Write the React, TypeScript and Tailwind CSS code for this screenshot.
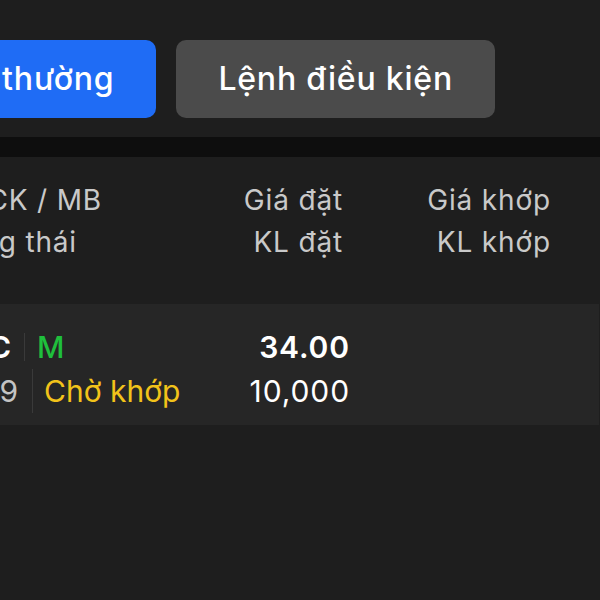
import React from "react";

export default function App() {
  return (
    <div
      className="w-[600px] h-[600px] overflow-hidden bg-[#1e1e1e]"
      style={{ fontFamily: "Inter, 'Noto Sans', sans-serif" }}
    >
      <div className="w-[800px] -ml-[200px]">
        {/* Tabs */}
        <div className="flex justify-end gap-[20px] pr-[105px] pt-[40px]">
          <div className="shrink-0 whitespace-nowrap px-[42px] h-[78px] rounded-[10px] bg-[#1f6cf5] flex items-center justify-center text-white text-[32px] tracking-[0.025em] font-medium">
            Lệnh thường
          </div>
          <div className="shrink-0 whitespace-nowrap px-[42px] h-[78px] rounded-[10px] bg-[#4b4b4b] flex items-center justify-center text-white text-[32px] tracking-[0.025em] font-medium">
            Lệnh điều kiện
          </div>
        </div>

        {/* Divider band */}
        <div className="mt-[19px] h-[20px] bg-[#0e0e0e]" />

        {/* Header */}
        <div className="flex pl-[136px] pt-[22px] pb-[41px] text-[28px] tracking-[0.03em] leading-[42px] text-[#c9c9c9]">
          <div className="w-[257px] flex flex-col whitespace-nowrap">
            <span>Mã CK / MB</span>
            <span>Trạng thái</span>
          </div>
          <div className="w-[150px] flex flex-col text-right whitespace-nowrap">
            <span>Giá đặt</span>
            <span>KL đặt</span>
          </div>
          <div className="w-[208px] flex flex-col text-right whitespace-nowrap">
            <span>Giá khớp</span>
            <span>KL khớp</span>
          </div>
        </div>

        {/* Row */}
        <div className="flex pl-[147px] pt-[21px] pb-[12px] bg-[#262626] w-[799px] text-[30px] leading-[44px]">
          <div className="w-[252px] flex flex-col">
            <div className="flex items-center h-[44px]">
              <span className="w-[64px] flex justify-end whitespace-nowrap font-semibold text-white">VIC</span>
              <span className="ml-[13px] w-px h-[28px] bg-[#3a3a3a]" />
              <span className="ml-[12px] text-[#1fbf3c] font-medium">M</span>
            </div>
            <div className="flex items-center h-[44px]">
              <span className="w-[71px] flex justify-end whitespace-nowrap text-[#c4c4c4]">09:15:29</span>
              <span className="ml-[14px] w-px h-[44px] bg-[#3a3a3a]" />
              <span className="ml-[11px] text-[#f2c31a]">Chờ khớp</span>
            </div>
          </div>
          <div className="w-[151px] flex flex-col text-right text-white tracking-[0.03em]">
            <span className="font-semibold">34.00</span>
            <span>10,000</span>
          </div>
        </div>
      </div>
    </div>
  );
}
